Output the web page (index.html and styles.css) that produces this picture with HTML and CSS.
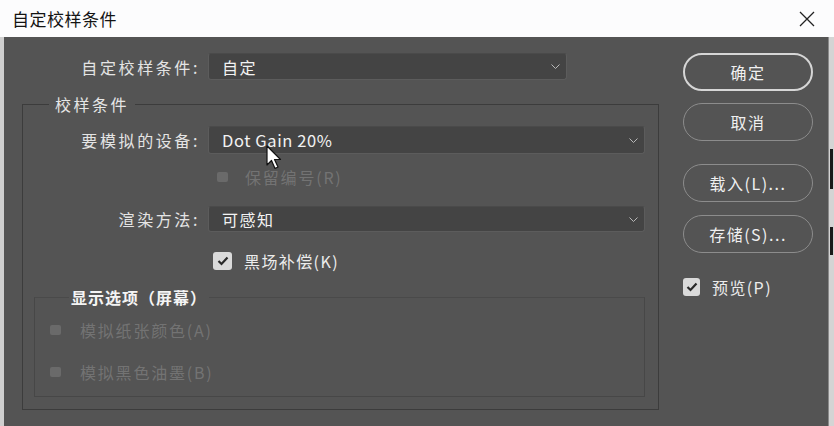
FILE: index.html
```html
<!DOCTYPE html>
<html lang="zh-CN">
<head>
<meta charset="utf-8">
<title>自定校样条件</title>
<link rel="stylesheet" href="styles.css">
</head>
<body>
<div class="window">
  <div class="titlebar">
    <span class="title">自定校样条件</span>
    <svg class="close" width="16" height="16" viewBox="0 0 16 16"><path d="M1 1 L15 15 M15 1 L1 15" stroke="#222" stroke-width="1.3" fill="none"/></svg>
  </div>
  <div class="body">
    <div class="edge-left"></div>
    <div class="content">
      <div class="left">
        <div class="row row1">
          <span class="label">自定校样条件:</span>
          <div class="select"><span class="val">自定</span><svg class="chev" width="9" height="5" viewBox="0 0 9 5"><path d="M0.5 0.5 L4.5 4.5 L8.5 0.5" stroke="#b8b8b8" fill="none"/></svg></div>
        </div>
        <fieldset class="outer">
          <legend class="lg-outer">校样条件</legend>
          <div class="row row2">
            <span class="label">要模拟的设备:</span>
            <div class="select"><span class="val latin">Dot Gain 20%</span><svg class="chev" width="9" height="5" viewBox="0 0 9 5"><path d="M0.5 0.5 L4.5 4.5 L8.5 0.5" stroke="#b8b8b8" fill="none"/></svg></div>
          </div>
          <div class="row dis-row keep">
            <span class="dis-box"></span><span class="dis-text">保留编号(R)</span>
          </div>
          <div class="row row3">
            <span class="label">渲染方法:</span>
            <div class="select"><span class="val">可感知</span><svg class="chev" width="9" height="5" viewBox="0 0 9 5"><path d="M0.5 0.5 L4.5 4.5 L8.5 0.5" stroke="#b8b8b8" fill="none"/></svg></div>
          </div>
          <div class="row check-row bpc">
            <span class="cbox"><svg width="12" height="10" viewBox="0 0 12 10"><path d="M1.5 5 L4.5 8 L10.5 1.5" stroke="#2a2a2a" stroke-width="2.2" fill="none"/></svg></span>
            <span class="ctext">黑场补偿(K)</span>
          </div>
          <fieldset class="inner">
            <legend class="lg-inner">显示选项（屏幕）</legend>
            <div class="row dis-row paper">
              <span class="dis-box"></span><span class="dis-text">模拟纸张颜色(A)</span>
            </div>
            <div class="row dis-row ink">
              <span class="dis-box"></span><span class="dis-text">模拟黑色油墨(B)</span>
            </div>
          </fieldset>
        </fieldset>
      </div>
      <div class="right">
        <button class="btn primary">确定</button>
        <button class="btn cancel">取消</button>
        <button class="btn load">载入(L)...</button>
        <button class="btn save">存储(S)...</button>
        <div class="row check-row preview">
          <span class="cbox"><svg width="12" height="10" viewBox="0 0 12 10"><path d="M1.5 5 L4.5 8 L10.5 1.5" stroke="#2a2a2a" stroke-width="2.2" fill="none"/></svg></span>
          <span class="ctext">预览(P)</span>
        </div>
      </div>
    </div>
    <div class="edge-right"></div>
  </div>
  <svg class="cursor" width="16" height="26" viewBox="0 0 16 26"><path d="M1 1 L1 20 L5.5 15.5 L9 23.5 L12 22 L8.5 14.5 L14.5 14.5 Z" fill="#fff" stroke="#111" stroke-width="1.2" stroke-linejoin="round"/></svg>
</div>
</body>
</html>
```
FILE: styles.css
```css
* { box-sizing: border-box; }
html, body { margin: 0; padding: 0; }
body {
  width: 834px;
  height: 426px;
  overflow: hidden;
  font-family: "Noto Sans CJK SC", "Noto Sans", sans-serif;
  background: #545454;
}
.window {
  position: relative;
  width: 834px;
  height: 426px;
  display: flex;
  flex-direction: column;
}
.titlebar {
  height: 37px;
  background: #fcfcfd;
  display: flex;
  align-items: center;
  justify-content: space-between;
  padding: 0 19px 0 12px;
}
.title {
  font-size: 17px;
  color: #141414;
  letter-spacing: 0.5px;
}
.body {
  flex: 1;
  display: flex;
}
.edge-left {
  width: 4px;
  background: #cfcfcf;
}
.edge-right {
  width: 6px;
  background:
    linear-gradient(#1a1a1a, #1a1a1a) 1px 112px / 3px 40px no-repeat,
    linear-gradient(#1a1a1a, #1a1a1a) 1px 190px / 3px 28px no-repeat,
    #d4d4d4;
  border-left: 1px solid #8a8a8a;
}
.content {
  flex: 1;
  display: flex;
  padding-left: 18px;
  background: #545454;
}
.left {
  width: 637px;
  padding-top: 16px;
}
.row {
  display: flex;
  align-items: center;
}
.label {
  width: 181px;
  text-align: right;
  padding-right: 4px;
  font-size: 16px;
  letter-spacing: 2.6px;
  color: #e4e4e4;
  flex: none;
}
.select {
  flex: 1;
  margin-left: 4px;
  height: 100%;
  background: #444444;
  border: 1px solid #5c5c5c;
  border-top-color: #4a4a4a;
  border-radius: 3px;
  display: flex;
  align-items: center;
  justify-content: space-between;
  padding: 0 6px 0 13px;
  color: #f2f2f2;
  font-size: 16px;
  letter-spacing: 1.5px;
}
.select .latin { letter-spacing: 0.6px; font-size: 16.5px; }
.chev { flex: none; }
.row1 { height: 27px; padding-right: 92px; }
.row1 .label { width: 182px; }
fieldset {
  margin: 0;
  padding: 0;
  border: 1px solid #3c3c3c;
  min-width: 0;
}
.outer {
  margin-top: 14px;
  padding: 12px 13px 12px 0;
}
.lg-outer {
  margin-left: 26px;
  padding: 0 6px;
  line-height: 20px;
  font-size: 16px;
  letter-spacing: 2.5px;
  color: #e6e6e6;
}
.row2 { height: 28px; }
.row3 { height: 26px; margin-top: 19px; }
.dis-row { height: 20px; }
.keep { margin-top: 13px; padding-left: 194px; }
.dis-box {
  width: 11px;
  height: 10px;
  border-radius: 2px;
  background: #6a6a6a;
  flex: none;
}
.dis-text {
  margin-left: 17px;
  font-size: 16px;
  letter-spacing: 1.8px;
  color: #737373;
}
.check-row { height: 19px; }
.bpc { margin-top: 19px; padding-left: 190px; }
.cbox {
  width: 19px;
  height: 18px;
  border-radius: 3px;
  background: #dadada;
  display: flex;
  align-items: center;
  justify-content: center;
  flex: none;
}
.ctext {
  margin-left: 12px;
  font-size: 16px;
  letter-spacing: 1.4px;
  color: #ececec;
}
.inner {
  margin: 17px 0 0 11px;
  padding: 13px 0 14px 0;
  border-color: #474747;
  border-top-color: #4a4a4a;
}
.lg-inner {
  margin-left: 34px;
  padding: 0 2px;
  line-height: 20px;
  font-size: 16px;
  font-weight: 700;
  letter-spacing: 1px;
  color: #f4f4f4;
}
.paper, .ink { padding-left: 15px; }
.paper .dis-text, .ink .dis-text { margin-left: 19px; }
.ink { margin-top: 22px; }
.right {
  margin-left: 24px;
  padding-top: 16px;
  width: 130px;
  display: flex;
  flex-direction: column;
}
.btn {
  height: 38px;
  width: 130px;
  border-radius: 19px;
  background: transparent;
  border: 1px solid #8c8c8c;
  color: #f0f0f0;
  font-family: "Noto Sans CJK SC", "Noto Sans", sans-serif;
  font-size: 16px;
  letter-spacing: 1.5px;
  padding: 0;
}
.primary { border: 2px solid #d6d6d6; }
.cancel { margin-top: 12px; }
.load { margin-top: 23px; }
.save { margin-top: 13px; }
.preview { margin-top: 24px; }
.preview .cbox { width: 17px; }
.cursor {
  position: absolute;
  left: 266px;
  top: 145px;
}
```
